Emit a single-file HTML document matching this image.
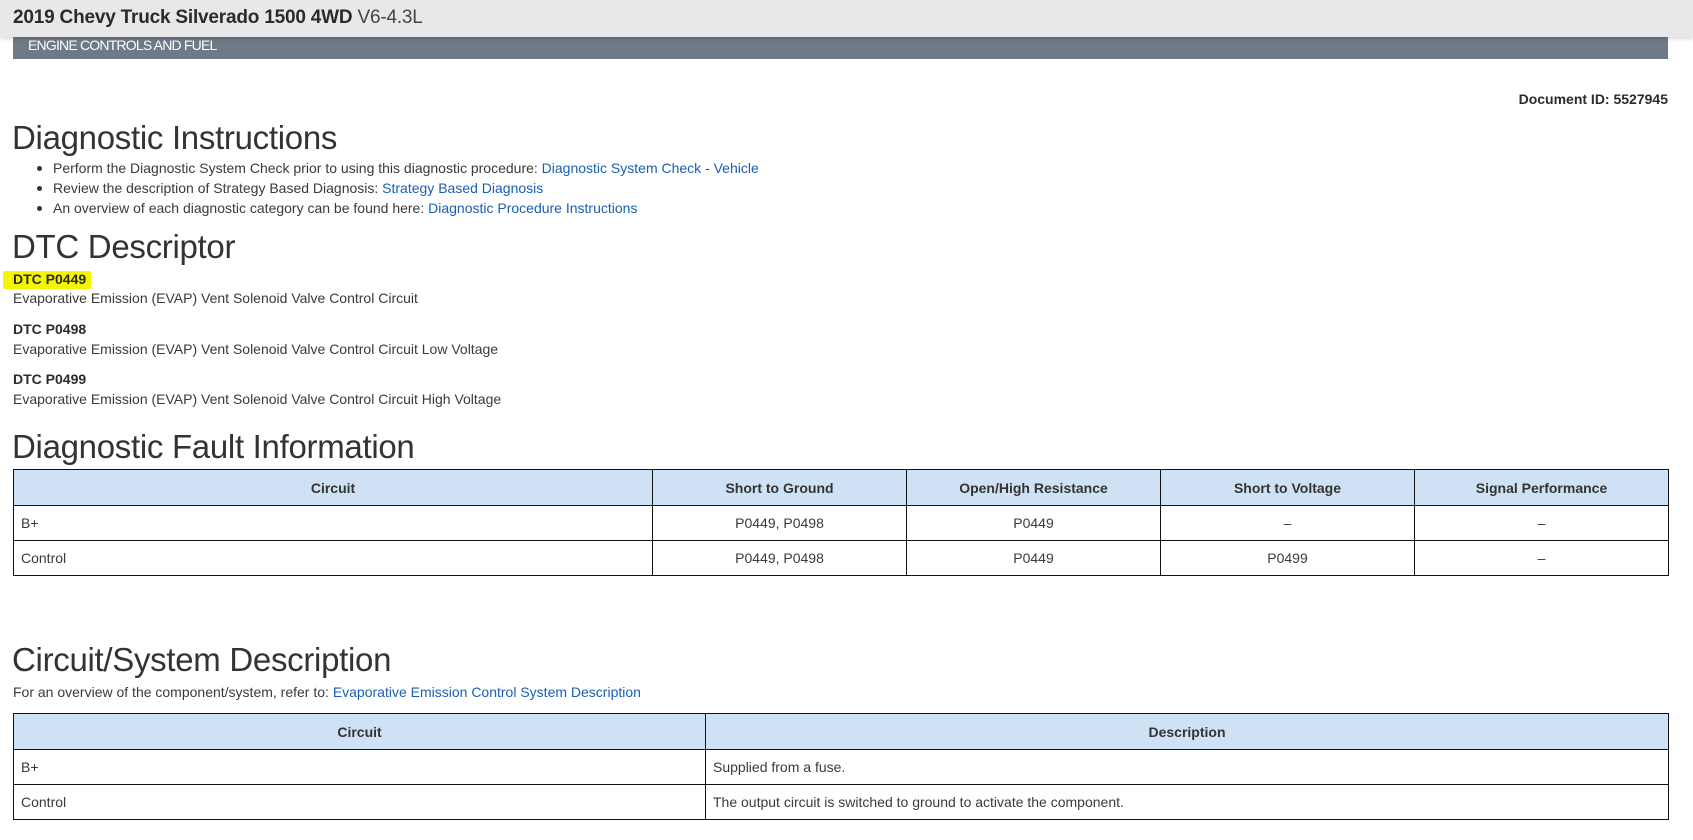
<!DOCTYPE html>
<html><head><meta charset="utf-8"><style>
*{margin:0;padding:0;box-sizing:border-box}
body{width:1693px;height:840px;overflow:hidden;background:#fff;font-family:"Liberation Sans",sans-serif;color:#3a3a3a;position:relative}
.a{position:absolute;white-space:nowrap}
.top{left:0;top:0;width:1693px;height:37px;background:#e8e8ea;box-shadow:0 2px 4px rgba(0,0,0,.15);z-index:2}
.top .t{position:absolute;left:13px;top:7px;font-size:19px;font-weight:bold;color:#2b2b2b;letter-spacing:-0.2px}
.top .t span{font-weight:normal;color:#444}
.bar{left:13px;top:37px;width:1655px;height:22px;background:#6e7a88}
.bar span{position:absolute;left:15px;top:0;font-size:14px;color:#fff;letter-spacing:-0.8px;line-height:16px}
h1{position:absolute;font-weight:normal;font-size:33px;color:#333;left:12px;white-space:nowrap;line-height:40px;letter-spacing:-0.3px}
.t14{font-size:14px;line-height:18px}
a{color:#1a5fb4;text-decoration:none}
.b{font-weight:bold;color:#2b2b2b}
.dot{position:absolute;width:5px;height:5px;border-radius:50%;background:#333}
table{position:absolute;border-collapse:collapse;font-size:14px;color:#3a3a3a}
td,th{border:1px solid #111;padding:0 7px}
th{background:#cfe2f5;font-weight:bold;color:#333}
td.c{text-align:center}
</style></head><body>
<div class="a top"><div class="t">2019 Chevy Truck Silverado 1500 4WD <span>V6-4.3L</span></div></div>
<div class="a bar"><span>ENGINE CONTROLS AND FUEL</span></div>
<div class="a t14 b" style="right:25px;top:90px;font-size:14px">Document ID: 5527945</div>

<h1 style="top:118px">Diagnostic Instructions</h1>
<div class="dot" style="left:37px;top:166px"></div>
<div class="dot" style="left:37px;top:186px"></div>
<div class="dot" style="left:37px;top:206px"></div>
<div class="a t14" style="left:53px;top:159px">Perform the Diagnostic System Check prior to using this diagnostic procedure: <a>Diagnostic System Check - Vehicle</a></div>
<div class="a t14" style="left:53px;top:179px">Review the description of Strategy Based Diagnosis: <a>Strategy Based Diagnosis</a></div>
<div class="a t14" style="left:53px;top:199px">An overview of each diagnostic category can be found here: <a>Diagnostic Procedure Instructions</a></div>

<h1 style="top:227px">DTC Descriptor</h1>
<div class="a" style="left:3px;top:271px;width:88px;height:18px;background:#f5f500;border-radius:2px"></div>
<div class="a t14 b" style="left:13px;top:270px">DTC P0449</div>
<div class="a t14" style="left:13px;top:289px">Evaporative Emission (EVAP) Vent Solenoid Valve Control Circuit</div>
<div class="a t14 b" style="left:13px;top:320px">DTC P0498</div>
<div class="a t14" style="left:13px;top:340px">Evaporative Emission (EVAP) Vent Solenoid Valve Control Circuit Low Voltage</div>
<div class="a t14 b" style="left:13px;top:370px">DTC P0499</div>
<div class="a t14" style="left:13px;top:390px">Evaporative Emission (EVAP) Vent Solenoid Valve Control Circuit High Voltage</div>

<h1 style="top:427px">Diagnostic Fault Information</h1>
<table style="left:13px;top:469px;width:1656px">
<tr style="height:36px"><th style="width:639px">Circuit</th><th style="width:254px">Short to Ground</th><th style="width:254px">Open/High Resistance</th><th style="width:254px">Short to Voltage</th><th>Signal Performance</th></tr>
<tr style="height:35px"><td>B+</td><td class="c">P0449, P0498</td><td class="c">P0449</td><td class="c">–</td><td class="c">–</td></tr>
<tr style="height:35px"><td>Control</td><td class="c">P0449, P0498</td><td class="c">P0449</td><td class="c">P0499</td><td class="c">–</td></tr>
</table>

<h1 style="top:640px">Circuit/System Description</h1>
<div class="a t14" style="left:13px;top:683px">For an overview of the component/system, refer to: <a>Evaporative Emission Control System Description</a></div>
<table style="left:13px;top:713px;width:1656px">
<tr style="height:36px"><th style="width:692px">Circuit</th><th>Description</th></tr>
<tr style="height:35px"><td>B+</td><td>Supplied from a fuse.</td></tr>
<tr style="height:35px"><td>Control</td><td>The output circuit is switched to ground to activate the component.</td></tr>
</table>
</body></html>
